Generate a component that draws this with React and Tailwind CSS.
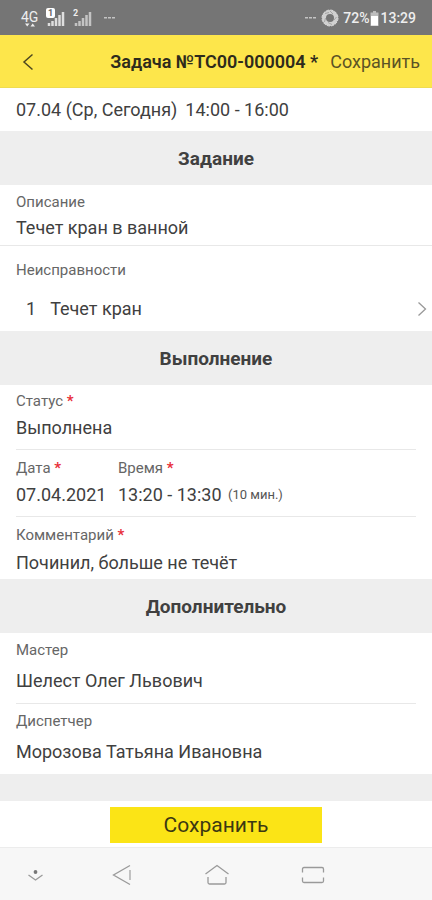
import { useState } from 'react';

const SectionTitle = ({ children }) => (
  <h2 className="flex h-[54px] items-center justify-center bg-[#eeeeee] pt-[3px] text-[19px] font-bold text-[#404040]">
    {children}
  </h2>
);

const Label = ({ htmlFor, required, children }) => (
  <label htmlFor={htmlFor} className="block text-[15px] leading-5 text-[#666]">
    {children}
    {required && <span className="font-bold text-[#e8303a]"> *</span>}
  </label>
);

const ReadOnlyField = ({ label, value }) => (
  <div>
    <p className="text-[15px] leading-5 text-[#666]">{label}</p>
    <p className="mt-[7px] text-lg leading-7">{value}</p>
  </div>
);

// Barras de cobertura de cada SIM
const Signal = ({ sim }) => (
  <svg width="19" height="20" viewBox="0 0 19 20" aria-hidden="true">
    {sim === 1 && <rect x="0" y="0" width="9" height="10" rx="2" fill="#fff" />}
    <text
      x={sim === 1 ? 4.5 : 2.5}
      y="8"
      textAnchor="middle"
      fontSize="9"
      fontWeight="700"
      fill={sim === 1 ? '#666' : '#eee'}
    >
      {sim}
    </text>
    <path
      d="M3 18v-3M6.500 18v-5M10 18v-8M13.500 18V7M17 18V4"
      stroke={sim === 1 ? '#dedede' : '#c4c4c4'}
      strokeWidth="2.500"
      fill="none"
    />
  </svg>
);

const Dots = () => (
  <svg width="12" height="4" viewBox="0 0 12 4" fill="#c4c4c4" aria-hidden="true">
    <rect x="0" y="1" width="3" height="1.500" />
    <rect x="4" y="1" width="3" height="1.500" />
    <rect x="8" y="1" width="3" height="1.500" />
  </svg>
);

const StatusBar = () => (
  <div className="flex h-[35px] items-center justify-between bg-[#757575] pl-[21px] pr-4 pt-px text-[#eeeeee]">
    <div className="flex items-center gap-2">
      <div className="flex flex-col items-center pt-[2px]">
        <span className="text-sm leading-3">4G</span>
        <svg width="10" height="4" viewBox="0 0 10 4" fill="#eee" aria-hidden="true">
          <path d="M0 .5h4.500L2.200 3.500zM5.500 3.500H10L7.700.5z" />
        </svg>
      </div>
      <Signal sim={1} />
      <Signal sim={2} />
      <div className="pl-1">
        <Dots />
      </div>
    </div>
    <div className="flex items-center">
      <Dots />
      <svg className="ml-1" width="18" height="18" viewBox="0 0 18 18" fill="none" aria-hidden="true">
        <circle cx="9" cy="9" r="6" stroke="#d0d0d0" strokeWidth="4" />
        <circle cx="9" cy="9" r="8" stroke="#d8d8d8" strokeWidth="1" strokeDasharray="3 1.200" />
        <path d="M9 2l3 3M15.500 8l-2.500 3M11 15.500l-4-2M3.500 13l1-4M4 4.500l4-1" stroke="#a4a4a4" strokeWidth="1" />
      </svg>
      <span className="ml-1 text-sm font-medium">72%</span>
      <svg className="mx-px" width="9" height="15" viewBox="0 0 9 15" aria-hidden="true">
        <path d="M3 0h3v1.500h2.500V15H.500V1.500H3z" fill="#bdbdbd" />
        <rect x="1" y="5" width="7" height="9.500" fill="#fff" />
      </svg>
      <span className="text-sm font-medium">13:29</span>
    </div>
  </div>
);

const NavBar = () => (
  <nav className="flex h-[52px] items-center bg-[#f7f7f7] pl-[23px] pt-px text-[#9a9a9a]">
    <button type="button" aria-label="Скрыть" className="flex w-[26px] justify-center">
      <svg width="18" height="16" viewBox="0 0 18 16" fill="none" stroke="currentColor" strokeWidth="1.300">
        <path d="M1.500 8L8.500 13l7-5" />
        <circle cx="8.500" cy="5" r="1.900" fill="#777" stroke="none" />
      </svg>
    </button>
    <button type="button" aria-label="Назад" className="ml-[60px] flex w-[26px] justify-center">
      <svg width="20" height="22" viewBox="0 0 20 22" fill="none" stroke="currentColor" strokeWidth="1.300">
        <path d="M18 1.500L1.500 11 18 20.500" />
        <path d="M18 6v10" stroke="#bbb" strokeWidth="1.800" />
      </svg>
    </button>
    <button type="button" aria-label="Домой" className="ml-[69px] flex w-[26px] justify-center">
      <svg width="26" height="22" viewBox="0 0 26 22" fill="none" stroke="currentColor" strokeWidth="1.300">
        <path d="M1.500 10L13 1.500 24.500 10" />
        <path d="M4 13v5.500q0 1.500 1.500 1.500h15q1.500 0 1.500-1.500V13" />
      </svg>
    </button>
    <button type="button" aria-label="Недавние" className="ml-[70px] flex w-[26px] justify-center">
      <svg width="24" height="18" viewBox="0 0 24 18" fill="none" stroke="currentColor" strokeWidth="1.300">
        <path d="M1.500 6.500V3q0-1.500 1.500-1.500h18q1.500 0 1.500 1.500v3.500M1.500 11.500V15q0 1.500 1.500 1.500h18q1.500 0 1.500-1.500v-3.500" />
      </svg>
    </button>
  </nav>
);

export default function App() {
  const [fecha, setFecha] = useState('07.04.2021');
  const [hora, setHora] = useState('13:20 - 13:30');
  const [comentario, setComentario] = useState('Починил, больше не течёт');

  return (
    <div className="flex min-h-screen flex-col bg-white font-['Roboto','Noto_Sans',sans-serif] text-[#404040]">
      <StatusBar />

      <header className="flex h-[53px] items-center border-b border-[#efdc50] bg-[#fde64b] pl-[22px] pr-3 pt-[2px]">
        <button type="button" aria-label="Назад" className="flex w-3 justify-center">
          <svg width="12" height="18" viewBox="0 0 12 18" fill="none" stroke="#4d4720" strokeWidth="1.500">
            <path d="M10.500 1.500L2 9l8.500 7.500" />
          </svg>
        </button>
        <h1 className="ml-auto text-lg font-semibold text-[#2e2b1c]">Задача №ТС00-000004 *</h1>
        <button type="button" className="ml-3 text-lg text-[#5b5325]">Сохранить</button>
      </header>

      <main className="flex-1 bg-[#eeeeee]">
        <p className="flex h-[43px] items-center gap-2 bg-white px-4 text-lg">
          <span>07.04 (Ср, Сегодня)</span>
          <span>14:00 - 16:00</span>
        </p>

        <SectionTitle>Задание</SectionTitle>
        <section className="bg-white">
          <div className="border-b border-[#e8e8e8] px-4 pb-[3px] pt-[7px]">
            <p className="text-[15px] leading-5 text-[#666]">Описание</p>
            <p className="mt-[2px] text-lg leading-7">Течет кран в ванной</p>
          </div>
          <div className="pt-[14px]">
            <p className="px-4 text-[15px] leading-5 text-[#666]">Неисправности</p>
            <button type="button" className="mt-[7px] flex h-11 w-full items-center pl-[26px] pr-[5px] text-lg">
              <span>1</span>
              <span className="ml-[14px]">Течет кран</span>
              <svg className="ml-auto" width="10" height="16" viewBox="0 0 10 16" fill="none" stroke="#999" strokeWidth="1.300">
                <path d="M1.500 1.500L8.500 8l-7 6.500" />
              </svg>
            </button>
          </div>
        </section>

        <SectionTitle>Выполнение</SectionTitle>
        <section className="bg-white px-4">
          <div className="border-b border-[#e8e8e8] pb-[7px] pt-[6px]">
            <Label htmlFor="status" required>Статус</Label>
            <select id="status" className="mt-[3px] block h-7 w-full appearance-none bg-transparent text-lg leading-7">
              <option>Выполнена</option>
            </select>
          </div>
          <div className="flex border-b border-[#e8e8e8] pb-[7px] pt-2">
            <div className="w-[102px]">
              <Label htmlFor="fecha" required>Дата</Label>
              <input
                id="fecha"
                value={fecha}
                onChange={(e) => setFecha(e.target.value)}
                className="mt-[3px] block h-7 w-full bg-transparent text-lg"
              />
            </div>
            <div>
              <Label htmlFor="hora" required>Время</Label>
              <div className="mt-[3px] flex h-7 items-center">
                <input
                  id="hora"
                  value={hora}
                  onChange={(e) => setHora(e.target.value)}
                  className="h-7 w-[110px] bg-transparent text-lg"
                />
                <span className="text-[13px] text-[#555]">(10 мин.)</span>
              </div>
            </div>
          </div>
          <div className="pb-[2px] pt-2">
            <Label htmlFor="comentario" required>Комментарий</Label>
            <input
              id="comentario"
              value={comentario}
              onChange={(e) => setComentario(e.target.value)}
              className="mt-1 block h-7 w-full bg-transparent text-lg"
            />
          </div>
        </section>

        <SectionTitle>Дополнительно</SectionTitle>
        <section className="bg-white px-4">
          <div className="border-b border-[#e8e8e8] pb-2 pt-[7px]">
            <ReadOnlyField label="Мастер" value="Шелест Олег Львович" />
          </div>
          <div className="pb-2 pt-[7px]">
            <ReadOnlyField label="Диспетчер" value="Морозова Татьяна Ивановна" />
          </div>
        </section>
      </main>

      <footer>
        <div className="flex h-[47px] items-start justify-center border-b border-[#ececec] pt-[6px]">
          <button type="button" className="h-9 w-[212px] bg-[#fbe416] pt-px text-[21px] text-[#3c3812]">
            Сохранить
          </button>
        </div>
        <NavBar />
      </footer>
    </div>
  );
}
